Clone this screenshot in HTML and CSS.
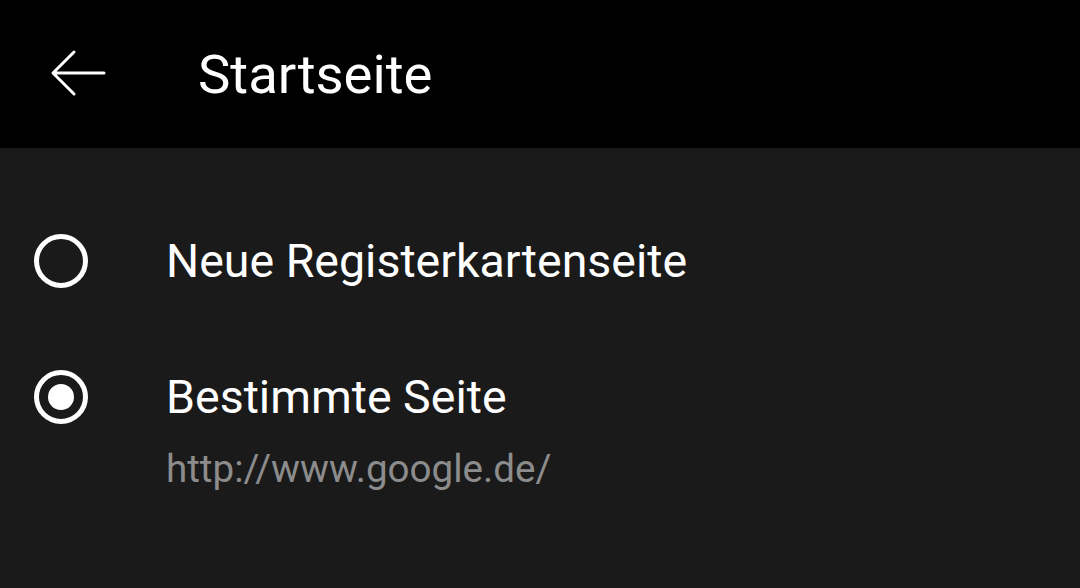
FILE: index.html
```html
<!DOCTYPE html>
<html>
<head>
  <meta charset="UTF-8">
  <title>Startseite</title>
  <link rel="stylesheet" href="styles.css">
</head>
<body>

  <header class="topbar">
    <span class="back">
      <svg width="56" height="48" viewBox="0 0 56 48">
        <path d="M54 24 H4 M24 3 L3 24 L24 45" fill="none" stroke="#fff" stroke-width="3" stroke-linecap="round" stroke-linejoin="round"/>
      </svg>
    </span>
    <h1 class="title">Startseite</h1>
  </header>

  <main class="options">
    <div class="option">
      <span class="radio"></span>
      <div class="label">Neue Registerkartenseite</div>
    </div>

    <div class="option option-url">
      <span class="radio checked"></span>
      <div class="text">
        <div class="label">Bestimmte Seite</div>
        <div class="sub">http://www.google.de/</div>
      </div>
    </div>
  </main>

</body>
</html>
```

FILE: styles.css
```css
/* Page */
html, body {
  margin: 0;
  height: 100%;
}

body {
  background: #1a1a1a;
  color: #fff;
  font-family: Roboto, "Noto Sans", sans-serif;
}

/* Top bar */
.topbar {
  background: #000;
  height: 148px;
  display: flex;
  align-items: center;
  padding-left: 50px;
  box-sizing: border-box;
}

.back {
  display: flex;
  width: 148px;
  margin-top: -3px;
}

.title {
  margin: 0;
  font-size: 54.5px;
  font-weight: 400;
}

/* Radio list */
.options {
  padding-top: 86px;
}

.option {
  display: flex;
  align-items: center;
  padding-left: 34px;
  height: 54px;
  margin-bottom: 82px;
}

.option-url {
  align-items: flex-start;
}

.radio {
  width: 54px;
  height: 54px;
  box-sizing: border-box;
  border: 5px solid #fff;
  border-radius: 50%;
  flex-shrink: 0;
  margin-right: 78px;
  position: relative;
}

.radio.checked::after {
  content: "";
  position: absolute;
  left: 9px;
  top: 9px;
  width: 26px;
  height: 26px;
  border-radius: 50%;
  background: #fff;
}

.label {
  font-size: 46.5px;
  line-height: 54px;
}

.sub {
  font-size: 38.6px;
  color: #8c8c8c;
  margin-top: 22px;
}
```
